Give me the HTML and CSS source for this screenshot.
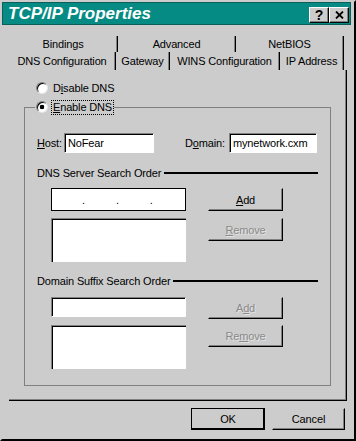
FILE: index.html
```html
<!DOCTYPE html>
<html lang="en">
<head>
    <meta charset="UTF-8">
    <meta name="viewport" content="width=device-width, initial-scale=1.0">
    <title>TCP/IP Properties</title>
    <link rel="stylesheet" href="styles.css">
</head>
<body>
    <div class="window">
        <div class="titlebar">
            <span class="title">TCP/IP Properties</span>
            <div class="caption-buttons">
                <span class="cap-btn help">?</span>
                <span class="cap-btn close">
                    <svg width="9" height="8" viewBox="0 0 9 8">
                        <path d="M1 0.5L8 7.5M8 0.5L1 7.5" stroke="#000" stroke-width="1.8"/>
                    </svg>
                </span>
            </div>
        </div>

        <div class="tabs">
            <div class="tab-row back">
                <div class="tab tab-bindings">Bindings</div>
                <div class="tab tab-advanced">Advanced</div>
                <div class="tab tab-netbios">NetBIOS</div>
            </div>
            <div class="tab-row front">
                <div class="tab tab-dns">DNS Configuration</div>
                <div class="tab tab-gateway">Gateway</div>
                <div class="tab tab-wins">WINS Configuration</div>
                <div class="tab tab-ip">IP Address</div>
            </div>
        </div>

        <div class="panel">
            <label class="option">
                <span class="radio"></span>
                <span>D<u>i</u>sable DNS</span>
            </label>

            <fieldset class="group">
                <legend class="option">
                    <span class="radio checked"></span>
                    <span class="focus"><u>E</u>nable DNS</span>
                </legend>

                <div class="host-row">
                    <label class="host-label"><u>H</u>ost:</label>
                    <input class="field host-field" type="text" value="NoFear">
                    <label class="domain-label">D<u>o</u>main:</label>
                    <input class="field domain-field" type="text" value="mynetwork.cxm">
                </div>

                <div class="section-title">DNS Server Search Order</div>
                <div class="entry-grid">
                    <div class="ip-box"><span>.</span><span>.</span><span>.</span></div>
                    <button class="btn"><u>A</u>dd</button>
                    <div class="list-box"></div>
                    <button class="btn" disabled><u>R</u>emove</button>
                </div>

                <div class="section-title">Domain Suffix Search Order</div>
                <div class="entry-grid suffix">
                    <input class="field suffix-field" type="text" value="">
                    <button class="btn" disabled>A<u>d</u>d</button>
                    <div class="list-box"></div>
                    <button class="btn" disabled>Re<u>m</u>ove</button>
                </div>
            </fieldset>
        </div>

        <div class="footer">
            <button class="btn default ok">OK</button>
            <button class="btn cancel">Cancel</button>
        </div>
    </div>
</body>
</html>
```

FILE: styles.css
```css
* {
    margin: 0;
    padding: 0;
    box-sizing: border-box;
}

body {
    background: #cccccc;
    font-family: "Liberation Sans", Arial, sans-serif;
    font-size: 11px;
    letter-spacing: -0.15px;
    color: #000;
}

.window {
    width: 356px;
    height: 441px;
    border: 2px solid;
    border-color: #cccccc #000 #000 #cccccc;
}

/* title bar */
.titlebar {
    height: 23px;
    margin-right: 3px;
    background: #058b83;
    border: 1px solid #0b5f5b;
    display: flex;
    align-items: center;
    padding: 0 1px 0 5px;
}

.title {
    color: #fff;
    font-weight: bold;
    font-style: italic;
    font-size: 17px;
    letter-spacing: 0;
}

.caption-buttons {
    margin-left: auto;
    align-self: flex-end;
    margin-bottom: 1px;
    display: flex;
}

.cap-btn {
    width: 20px;
    height: 16px;
    background: #cccccc;
    border: 1px solid;
    border-color: #fff #000 #000 #fff;
    box-shadow: inset -1px -1px #808080;
    display: flex;
    align-items: center;
    justify-content: center;
    font-weight: bold;
    font-size: 14px;
    letter-spacing: 0;
}

/* tabs */
.tabs {
    margin: 9px 0 0 7px;
}

.tab-row {
    display: flex;
    height: 18px;
}

.tab {
    display: flex;
    align-items: center;
    justify-content: center;
    border-right: 1px solid #000;
    box-shadow: inset -1px 0 #808080;
}

.tab-row.back .tab {
    margin-top: 2px;
}

.tab-bindings { width: 109px; }
.tab-advanced { width: 118px; }
.tab-netbios { width: 108px; }
.tab-dns { width: 107px; }
.tab-gateway { width: 54px; }
.tab-wins { width: 110px; }
.tab-ip { width: 64px; }

/* page */
.panel {
    margin-left: 7px;
    width: 338px;
    height: 331px;
    border-right: 1px solid #000;
    border-bottom: 1px solid #000;
    box-shadow: inset -1px -1px #808080;
    padding-top: 10px;
}

.option {
    display: flex;
    align-items: center;
    height: 16px;
    margin-left: 27px;
    gap: 5px;
}

.radio {
    width: 12px;
    height: 12px;
    border-radius: 50%;
    background: #fff;
    border: 1px solid;
    border-color: #808080 #e8e8e8 #e8e8e8 #808080;
    box-shadow: inset 1px 1px #000;
}

.radio.checked {
    background: radial-gradient(circle, #000 0 2px, #fff 2.6px);
}

.group {
    margin: 3px 0 0 15px;
    width: 307px;
    height: 287px;
    border: 1px solid #808080;
}

.group legend.option {
    margin-left: 10px;
    padding: 0 1px;
    gap: 4px;
}

.focus {
    padding: 0 1px 1px;
    outline: 1px dotted #000;
}

.host-row {
    display: flex;
    align-items: center;
    height: 20px;
    margin-top: 18px;
    padding-left: 12px;
}

.host-label { width: 27px; }
.domain-label { width: 44px; margin-left: 31px; }

.field {
    height: 20px;
    background: #fff;
    font: inherit;
    letter-spacing: inherit;
    color: #000;
    border: 1px solid;
    border-color: #808080 #fff #fff #808080;
    box-shadow: inset 1px 1px #000;
    padding-left: 3px;
    outline: none;
}

.host-field { width: 90px; }
.domain-field { width: 88px; }

.section-title {
    display: flex;
    align-items: center;
    height: 16px;
    margin-top: 12px;
    padding: 0 12px;
}

.section-title::after {
    content: "";
    flex: 1;
    height: 2px;
    background: #000;
    margin-left: 3px;
}

.entry-grid {
    display: grid;
    grid-template-columns: 135px 75px;
    column-gap: 22px;
    row-gap: 7px;
    align-items: start;
    margin: 7px 0 0 26px;
}

.entry-grid + .section-title {
    margin-top: 11px;
}

.entry-grid.suffix {
    margin-top: 8px;
    row-gap: 6px;
}

.ip-box {
    height: 23px;
    background: #fff;
    border: 1px solid #000;
    display: flex;
    align-items: center;
    padding-left: 30px;
    gap: 31px;
}

.list-box {
    height: 44px;
    background: #fff;
    border-top: 1px solid #808080;
    border-left: 1px solid #808080;
    box-shadow: inset 1px 1px #000;
}

.btn {
    height: 23px;
    background: #cccccc;
    font: inherit;
    letter-spacing: inherit;
    color: #000;
    border: 1px solid;
    border-color: #cccccc #000 #000 #cccccc;
    box-shadow: inset -1px -1px #808080;
}

.btn:disabled {
    color: #8a8a8a;
    text-shadow: 1px 1px #e4e4e4;
}

.suffix .btn {
    height: 22px;
}

/* bottom buttons */
.footer {
    display: flex;
    justify-content: flex-end;
    gap: 7px;
    margin-top: 7px;
    padding-right: 9px;
}

.footer .btn {
    height: 22px;
}

.btn.default {
    border-color: #000;
    box-shadow: inset -1px -1px #000;
}

.ok { width: 74px; }
.cancel { width: 73px; }
```
